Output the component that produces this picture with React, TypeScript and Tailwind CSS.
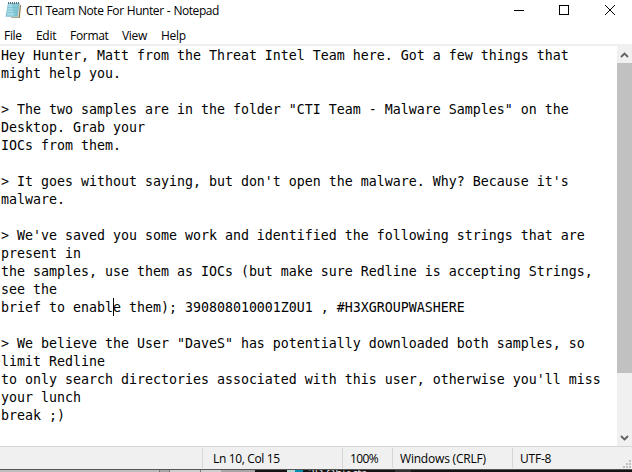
const UI = "font-['Open_Sans','Noto_Sans',sans-serif]";

const lines = [
  'Hey Hunter, Matt from the Threat Intel Team here. Got a few things that',
  'might help you.',
  '',
  '> The two samples are in the folder "CTI Team - Malware Samples" on the',
  'Desktop. Grab your',
  'IOCs from them.',
  '',
  "> It goes without saying, but don't open the malware. Why? Because it's",
  'malware.',
  '',
  "> We've saved you some work and identified the following strings that are",
  'present in',
  'the samples, use them as IOCs (but make sure Redline is accepting Strings,',
  'see the',
  'brief to enable them); 390808010001Z0U1 , #H3XGROUPWASHERE',
  '',
  '> We believe the User "DaveS" has potentially downloaded both samples, so',
  'limit Redline',
  "to only search directories associated with this user, otherwise you'll miss",
  'your lunch',
  'break ;)',
];

function NotepadIcon() {
  return (
    <svg width="18" height="18" viewBox="0 0 18 18" className="shrink-0">
      <path d="M15.5 3L17 4.5L15.8 17H7z" fill="#85764f" />
      <path d="M15 3L16 3.5L14.6 16.5H6z" fill="#e8e2cf" />
      <path d="M4 2H15.5L13.6 15.8H1.5z" fill="#7fbfd0" />
      <path d="M4.5 3H14L12.5 14.5H2.8z" fill="#a5dbe6" />
      <path d="M8 3H15L13.4 15H10z" fill="#6fb9cb" opacity=".55" />
      <path d="M4 6.5H14M3.8 9H13.7M3.5 11.5H13.4" stroke="#74bacb" strokeWidth="0.6" />
      <path d="M4.5 1V3M6.5 1V3M8.5 1V3M10.5 1V3M12.5 1V3M14.5 1V3" stroke="#596f78" strokeWidth="1" />
    </svg>
  );
}

export default function App() {
  return (
    <div className="flex h-[472px] w-[632px] flex-col overflow-hidden bg-white text-black">
      <header className="flex h-6 shrink-0 items-start">
        <div className="pl-[4px] pt-px"><NotepadIcon /></div>
        <span className={`${UI} pl-[4px] pt-[2px] text-[12px] leading-[17px] tracking-[-0.44px] [word-spacing:0.5px] whitespace-nowrap`}>CTI Team Note For Hunter - Notepad</span>
        <div className="ml-auto flex pr-[15px] pt-[5px]">
          <svg width="103" height="11" viewBox="0 0 103 11" shapeRendering="crispEdges" fill="none" stroke="#000">
            <path d="M0 5.5H10" />
            <path d="M45.5 0.5H54.5V9.5H45.5z" />
            <path d="M91 0L101 10M101 0L91 10" shapeRendering="auto" />
          </svg>
        </div>
      </header>
      <nav className={`${UI} flex h-5 shrink-0 pl-[4px] pt-[3px] text-[12px] leading-[17px] tracking-[-0.3px]`}>
        <span className="w-8">File</span><span className="w-[34px]">Edit</span><span className="w-[52px]">Format</span><span className="w-[39px]">View</span><span>Help</span>
      </nav>
      <main className="flex h-[402px] shrink-0 border-t-2 border-[#f0f0f0]">
        <div className="grow pl-px pt-px font-['DejaVu_Sans_Mono',monospace] text-[13.29px] leading-[18px] whitespace-pre">
          {lines.map((line, i) => (
            <div key={i} className="relative h-[18px]">
              {line}
              {i === 14 && <i className="absolute -top-px left-[112px] h-[18px] w-px bg-black" />}
            </div>
          ))}
        </div>
        <div className="flex w-[15px] flex-col items-center bg-[#f0f0f0]">
          <div className="flex h-[17px] items-center"><svg width="9" height="6" viewBox="0 0 9 6"><path d="M1 5L4.5 1.5L8 5" fill="none" stroke="#606060" strokeWidth="1.8" /></svg></div>
          <div className="h-[310px] w-full bg-[#c1c1c1]" />
          <div className="mt-auto flex h-[17px] items-center"><svg width="9" height="6" viewBox="0 0 9 6"><path d="M1 1L4.5 4.5L8 1" fill="none" stroke="#606060" strokeWidth="1.8" /></svg></div>
        </div>
      </main>
      <footer className={`${UI} flex h-[23px] shrink-0 border-t border-[#d7d7d7] bg-[#f0f0f0] pt-px text-[12px] leading-[22px] tracking-[-0.2px] whitespace-nowrap`}>
        <div className="w-[202px]" />
        <div className="h-5 w-[140px] border-l border-[#d7d7d7] pl-[10px] tracking-[-0.35px]">Ln 10, Col 15</div>
        <div className="h-5 w-[50px] border-l border-[#d7d7d7] pl-[7px] tracking-[-0.6px]">100%</div>
        <div className="h-5 w-[120px] border-l border-[#d7d7d7] pl-[7px]">Windows (CRLF)</div>
        <div className="h-5 w-[110px] border-l border-[#d7d7d7] pl-[7px]">UTF-8</div>
        <svg width="9" height="9" viewBox="0 0 9 9" className="mt-auto ml-auto" fill="#bfbfbf"><path d="M6 0h2v2h-2zM3 3h2v2h-2zM6 3h2v2h-2zM0 6h2v2h-2zM3 6h2v2h-2zM6 6h2v2h-2z" /></svg>
      </footer>
      <div className="flex h-[3px] shrink-0 overflow-hidden border-t border-[#555] bg-[#161314]">
        <div className="w-[159px] bg-[#bdbdbd]" />
        <div className="w-[11px] border-x border-[#777] bg-[#a9a9a9]" />
        <div className="w-[30px] bg-[#cfcfcf]" />
        <div className="w-[21px] border-l border-[#777] bg-[#cfcfcf]" />
        <div className="w-[34px] bg-[#aaa6a6]" />
        <div className="w-8 bg-[#161314]" />
        <div className="w-2 bg-[#b5d8d5]" />
        <div className="w-2 bg-[#008fb3]" />
        <div className={`${UI} -mt-[3px] w-[92px] pl-[5px] text-[12px] leading-[14px] tracking-[-0.2px] text-[#ddd]`}>3D Objects</div>
        <div className="w-4 bg-[#343234]" />
      </div>
    </div>
  );
}
